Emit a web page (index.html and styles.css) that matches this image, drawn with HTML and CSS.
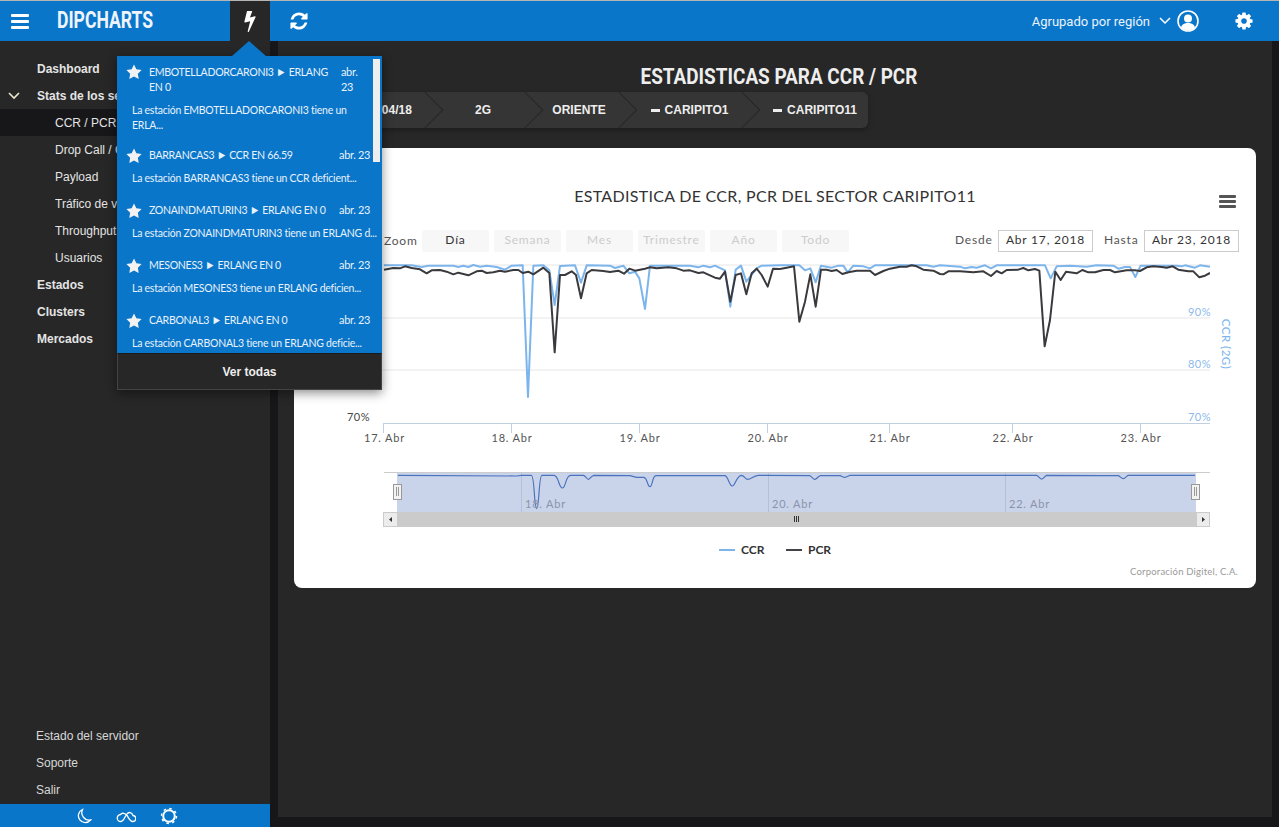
FILE: index.html
```html
<!DOCTYPE html>
<html lang="en">
<head>
<meta charset="UTF-8">
<meta name="viewport" content="width=device-width, initial-scale=1.0">
<title>Dipcharts</title>
<link rel="stylesheet" href="styles.css">
</head>
<body>

<header class="topbar">
    <button class="top-btn menu-btn" type="button">
        <svg width="18" height="15" viewBox="0 0 18 15"><rect width="18" height="3" rx="1"/><rect y="6" width="18" height="3" rx="1"/><rect y="12" width="18" height="3" rx="1"/></svg>
    </button>
    <div class="brand"><span class="brand-text">DIPCHARTS</span></div>
    <button class="top-btn bolt-btn" type="button">
        <svg width="12" height="21" viewBox="450 128 890 1664"><path d="M1333 566q18 20 7 44l-540 1157q-13 25-42 25-4 0-14-2-17-5-25.500-19t-4.500-30l197-808-406 101q-4 1-12 1-18 0-31-11-18-15-13-39l201-825q4-14 16-23t28-9h328q19 0 32 12.500t13 29.500q0 8-5 18l-171 463 396-98q8-2 12-2 19 0 34 15z"/></svg>
    </button>
    <button class="top-btn refresh-btn" type="button">
        <svg width="20" height="20" viewBox="0 0 1792 1792"><path d="M1639 1056q0 5-1 7-64 268-268 434.500t-478 166.500q-146 0-282.500-55t-243.500-157l-129 129q-19 19-45 19t-45-19-19-45v-448q0-26 19-45t45-19h448q26 0 45 19t19 45-19 45l-137 137q71 66 161 102t187 36q134 0 250-65t186-179q11-17 53-117 8-23 30-23h192q13 0 22.500 9.500t9.500 22.500zm25-800v448q0 26-19 45t-45 19h-448q-26 0-45-19t-19-45 19-45l138-138q-148-137-349-137-134 0-250 65t-186 179q-11 17-53 117-8 23-30 23h-199q-13 0-22.500-9.500t-9.500-22.500v-7q65-268 270-434.500t480-166.500q146 0 284 55.500t245 156.500l130-129q19-19 45-19t45 19 19 45z"/></svg>
    </button>
    <div class="top-right">
        <span class="group-label">Agrupado por región</span>
        <svg class="group-caret" width="12" height="8" viewBox="0 0 12 8"><path d="M1 1l5 5 5-5" fill="none" stroke="#fff" stroke-width="1.500"/></svg>
        <svg class="user-icon" width="22" height="22" viewBox="0 0 22 22"><circle cx="11" cy="11" r="10" fill="none" stroke="#fff" stroke-width="1.600"/><circle cx="11" cy="8.500" r="4"/><path d="M4 17.500c1-3.500 4-4.500 7-4.500s6 1 7 4.500c-2 2-4.500 3-7 3s-5-1-7-3z"/></svg>
        <svg class="gear-icon" width="20" height="20" viewBox="0 0 1792 1792"><path d="M1152 896q0-106-75-181t-181-75-181 75-75 181 75 181 181 75 181-75 75-181zm512-109v222q0 12-8 23t-20 13l-185 28q-19 54-39 91 35 50 107 138 10 12 10 25t-9 23q-27 37-99 108t-94 71q-12 0-26-9l-138-108q-44 23-91 38-16 136-29 186-7 28-36 28h-222q-14 0-24.500-8.500t-11.500-21.500l-28-184q-49-16-90-37l-141 107q-10 9-25 9-14 0-25-11-126-114-165-168-7-10-7-23 0-12 8-23 15-21 51-66.500t54-70.500q-27-50-41-99l-183-27q-13-2-21-12.500t-8-23.500v-222q0-12 8-23t19-13l186-28q14-46 39-92-40-57-107-138-10-12-10-24 0-10 9-23 26-36 98.500-107.500t94.500-71.500q13 0 26 10l138 107q44-23 91-38 16-136 29-186 7-28 36-28h222q14 0 24.500 8.500t11.500 21.500l28 184q49 16 90 37l142-107q9-9 24-9 13 0 25 10 129 119 165 170 7 8 7 22 0 12-8 23-15 21-51 66.500t-54 70.500q26 50 41 98l183 28q13 2 21 12.500t8 23.500z"/></svg>
    </div>
</header>

<div class="shell">
    <aside class="sidebar">
        <nav class="side-nav">
            <a class="side-item bold">Dashboard</a>
            <a class="side-item bold open">
                <svg class="open-caret" width="12" height="8" viewBox="0 0 12 8"><path d="M1 1l5 5 5-5" fill="none" stroke="#ece8cf" stroke-width="1.600"/></svg>
                Stats de los sectores
            </a>
            <a class="side-item sub current">CCR / PCR</a>
            <a class="side-item sub">Drop Call / CSSR</a>
            <a class="side-item sub">Payload</a>
            <a class="side-item sub">Tráfico de voz</a>
            <a class="side-item sub">Throughput</a>
            <a class="side-item sub">Usuarios</a>
            <a class="side-item bold">Estados</a>
            <a class="side-item bold">Clusters</a>
            <a class="side-item bold">Mercados</a>
        </nav>
        <div class="side-links">
            <a class="side-link">Estado del servidor</a>
            <a class="side-link">Soporte</a>
            <a class="side-link">Salir</a>
        </div>
        <div class="side-footer">
            <svg width="16" height="16" viewBox="0 0 16 16"><path d="M6.500 1.500A6.800 6.800 0 1 0 14.500 12 7.500 7.500 0 0 1 6.500 1.500z" fill="none" stroke="#fff" stroke-width="1.300"/></svg>
            <svg width="20" height="14" viewBox="0 0 20 14"><path d="M5 12.500a3.500 3.500 0 0 1-.5-7C6 3.500 9 4 11 6.500c1.500 2 3 6 5.500 6a3 3 0 0 0 .5-6C16 3 12.500 2.500 10.500 5.500 8.500 8.500 7.500 12.500 5 12.500z" fill="none" stroke="#fff" stroke-width="1.300"/></svg>
            <svg width="18" height="18" viewBox="0 0 18 18"><circle cx="9" cy="9" r="5.800" fill="none" stroke="#fff" stroke-width="2"/><circle cx="9" cy="9" r="7.500" fill="none" stroke="#fff" stroke-width="1.500" stroke-dasharray="2.500 3.390"/></svg>
        </div>
    </aside>

    <main class="content">
        <h1 class="page-title"><span class="page-title-text">ESTADISTICAS PARA CCR / PCR</span></h1>

        <div class="crumbs">
            <div class="crumb crumb-date">23/04/18</div>
            <div class="crumb crumb-tech">2G</div>
            <div class="crumb crumb-region">ORIENTE</div>
            <div class="crumb crumb-site"><i class="dash"></i>CARIPITO1</div>
            <div class="crumb crumb-sector"><i class="dash"></i>CARIPITO11</div>
        </div>

        <section class="card">
            <h2 class="chart-title">ESTADISTICA DE CCR, PCR DEL SECTOR CARIPITO11</h2>
            <svg class="chart-menu" width="17" height="13" viewBox="0 0 17 13"><rect width="17" height="3" rx="1"/><rect y="5" width="17" height="3" rx="1"/><rect y="10" width="17" height="3" rx="1"/></svg>

            <div class="toolbar">
                <span class="zoom-label">Zoom</span>
                <button class="range-btn active" type="button">Día</button>
                <button class="range-btn" type="button">Semana</button>
                <button class="range-btn" type="button">Mes</button>
                <button class="range-btn" type="button">Trimestre</button>
                <button class="range-btn" type="button">Año</button>
                <button class="range-btn" type="button">Todo</button>
                <div class="dates">
                    <span class="date-label">Desde</span>
                    <span class="date-box">Abr 17, 2018</span>
                    <span class="date-label date-label-to">Hasta</span>
                    <span class="date-box">Abr 23, 2018</span>
                </div>
            </div>

            <svg class="plot" width="962" height="310" viewBox="294 258 962 310">
                <defs>
                    <clipPath id="plotClip"><rect x="383" y="258" width="827" height="166"/></clipPath>
                </defs>

                <line class="grid" x1="383" y1="265" x2="1210" y2="265"/>
                <line class="grid" x1="383" y1="318" x2="1210" y2="318"/>
                <line class="grid" x1="383" y1="370" x2="1210" y2="370"/>
                <line class="axis" x1="383" y1="423.500" x2="1210" y2="423.500"/>
                <path class="axis" d="M383.500 423v10M511.500 423v10M639.500 423v10M767.500 423v10M889.500 423v10M1012.500 423v10M1140.500 423v10"/>

                <g clip-path="url(#plotClip)">
                    <g transform="translate(340 255) scale(.33333)">
                        <polyline class="line-ccr" points="132,31 215,31 245,36 265,32 340,32 355,36 370,32 385,36 400,30 420,35 440,32 470,36 495,44 515,32 548,31 564,426 580,32 610,31 628,46 644,150 660,33 705,31 723,83 740,31 810,32 825,39 850,32 868,55 885,50 898,70 915,162 930,32 1050,32 1075,37 1090,32 1110,37 1125,32 1155,46 1171,155 1187,44 1203,32 1219,80 1250,40 1265,32 1320,31"/>
                    </g>
                    <g transform="translate(780 255) scale(.33333)">
                        <polyline class="line-ccr" points="0,31 58,31 75,46 91,40 107,82 123,32 155,38 175,32 190,32 203,52 220,32 250,34 270,40 285,31 440,31 460,35 480,31 540,35 555,40 575,36 590,38 615,31 633,40 650,31 795,31 812,70 830,34 870,32 920,35 950,31 1000,32 1015,41 1035,36 1050,36 1066,66 1082,32 1190,32 1205,34 1215,31 1245,38 1260,31 1290,35"/>
                    </g>
                    <g transform="translate(340 255) scale(.33333)">
                        <polyline class="line-pcr" points="132,44 160,39 180,40 195,34 215,39 240,43 260,55 275,46 300,45 320,50 340,58 355,53 385,61 410,49 425,47 440,54 460,52 480,47 495,50 520,45 535,45 548,54 565,50 580,58 610,38 628,54 644,292 660,60 675,60 695,49 708,60 723,130 740,55 755,45 790,48 810,51 835,47 852,56 868,41 885,47 915,41 930,37 950,40 985,37 1010,40 1030,47 1050,46 1075,54 1090,52 1125,68 1140,71 1155,50 1171,140 1187,60 1203,55 1219,118 1235,55 1250,41 1265,60 1283,95 1299,41 1320,42"/>
                    </g>
                    <g transform="translate(780 255) scale(.33333)">
                        <polyline class="line-pcr" points="0,42 20,38 42,34 58,200 75,140 91,58 107,155 123,44 140,44 155,48 170,45 187,57 205,52 230,47 270,47 285,60 310,48 330,41 360,35 380,35 395,31 410,34 430,44 460,47 480,57 490,58 505,49 540,49 580,52 610,49 633,63 650,48 665,55 680,45 715,44 730,39 745,46 765,42 778,47 794,274 810,195 826,50 842,75 858,50 890,55 907,45 925,52 945,52 970,45 990,45 1005,52 1040,46 1065,46 1080,48 1100,37 1120,34 1145,36 1160,38 1178,34 1195,44 1225,49 1240,49 1258,67 1275,62 1290,54"/>
                    </g>
                </g>

                <text class="tick-left" x="370" y="421" text-anchor="end">70%</text>
                <text class="tick-right" x="1211" y="316" text-anchor="end">90%</text>
                <text class="tick-right" x="1211" y="368" text-anchor="end">80%</text>
                <text class="tick-right" x="1211" y="421" text-anchor="end">70%</text>
                <text class="axis-name" transform="translate(1222 344) rotate(90)" text-anchor="middle">CCR (2G)</text>

                <text class="tick-x" x="384.500" y="442" text-anchor="middle">17. Abr</text>
                <text class="tick-x" x="512" y="442" text-anchor="middle">18. Abr</text>
                <text class="tick-x" x="640" y="442" text-anchor="middle">19. Abr</text>
                <text class="tick-x" x="768" y="442" text-anchor="middle">20. Abr</text>
                <text class="tick-x" x="890" y="442" text-anchor="middle">21. Abr</text>
                <text class="tick-x" x="1013" y="442" text-anchor="middle">22. Abr</text>
                <text class="tick-x" x="1141" y="442" text-anchor="middle">23. Abr</text>

                <!-- navigator -->
                <line class="nav-top" x1="384" y1="472.500" x2="1210" y2="472.500"/>
                <rect class="nav-mask" x="397" y="473" width="799" height="39"/>
                <path class="nav-grid" d="M521.500 473v39M768.500 473v39M1005.500 473v39"/>
                <g transform="translate(370 460) scale(.33333)">
                    <path class="nav-line" d="M84 46L440 48L455 46L484 46C494 46 492 145 500 145C508 145 506 46 516 46L552 46C566 46 566 84 577 84C588 84 586 46 602 46L640 46C648 48 650 58 655 58C660 58 662 48 672 46L780 47L800 52L822 52C832 54 832 80 840 80C848 80 846 48 858 47L1065 47C1075 50 1078 78 1087 78C1096 78 1098 48 1115 46C1124 48 1126 58 1133 58C1142 58 1150 48 1165 46L1320 47C1325 50 1330 58 1335 58C1340 58 1343 50 1350 47"/>
                </g>
                <g transform="translate(800 460) scale(.33333)">
                    <path class="nav-line" d="M60 47L120 47C126 49 130 52 135 52C140 52 144 48 150 46L710 46C716 48 720 57 725 57C730 57 734 48 740 46L905 47L955 47C960 49 965 56 970 56C975 56 980 48 985 46L1185 46"/>
                </g>
                <text class="nav-label" x="525" y="508">18. Abr</text>
                <text class="nav-label" x="772" y="508">20. Abr</text>
                <text class="nav-label" x="1009" y="508">22. Abr</text>

                <rect class="nav-handle" x="393.500" y="484.500" width="8" height="15"/>
                <path class="nav-grip" d="M396.500 487v9M398.500 487v9"/>
                <rect class="nav-handle" x="1191.500" y="484.500" width="8" height="15"/>
                <path class="nav-grip" d="M1194.500 487v9M1196.500 487v9"/>

                <rect class="scroll-track" x="383" y="512" width="827" height="15"/>
                <rect class="scroll-btn" x="383.500" y="512.500" width="14" height="14"/>
                <rect class="scroll-btn" x="1196.500" y="512.500" width="13" height="14"/>
                <path class="scroll-arrow" d="M392 517v5l-3-2.500zM1202 517v5l3-2.500z"/>
                <path class="nav-grip-dark" d="M794.500 516v6M796.500 516v6M798.500 516v6"/>

                <!-- legend -->
                <line class="line-ccr-solid" x1="719" y1="550" x2="735" y2="550"/>
                <text class="legend-text" x="741" y="554">CCR</text>
                <line class="line-pcr-solid" x1="786" y1="550" x2="802" y2="550"/>
                <text class="legend-text" x="808" y="554">PCR</text>
            </svg>

            <div class="credits">Corporación Digitel, C.A.</div>
        </section>
    </main>
</div>

<!-- notifications dropdown -->
<div class="notif">
    <div class="notif-arrow"></div>
    <div class="notif-list">
        <div class="notif-scroll"></div>
        <div class="notif-item notif-item-long">
            <div class="notif-head">
                <svg class="star" width="16" height="15" viewBox="0 0 17 16"><path d="M8.500 .5l2.500 5.200 5.600.8-4 4 .9 5.500-5-2.700-5 2.700.9-5.500-4-4 5.600-.8z"/></svg>
                <span class="notif-title">EMBOTELLADORCARONI3 ► ERLANG<br>EN 0</span>
                <span class="notif-date notif-date-wrap">abr.<br>23</span>
            </div>
            <p class="notif-text">La estación EMBOTELLADORCARONI3 tiene un<br>ERLA...</p>
        </div>
        <div class="notif-item">
            <div class="notif-head">
                <svg class="star" width="16" height="15" viewBox="0 0 17 16"><path d="M8.500 .5l2.500 5.200 5.600.8-4 4 .9 5.500-5-2.700-5 2.700.9-5.500-4-4 5.600-.8z"/></svg>
                <span class="notif-title">BARRANCAS3 ► CCR EN 66.59</span>
                <span class="notif-date">abr. 23</span>
            </div>
            <p class="notif-text">La estación BARRANCAS3 tiene un CCR deficient...</p>
        </div>
        <div class="notif-item">
            <div class="notif-head">
                <svg class="star" width="16" height="15" viewBox="0 0 17 16"><path d="M8.500 .5l2.500 5.200 5.600.8-4 4 .9 5.500-5-2.700-5 2.700.9-5.500-4-4 5.600-.8z"/></svg>
                <span class="notif-title">ZONAINDMATURIN3 ► ERLANG EN 0</span>
                <span class="notif-date">abr. 23</span>
            </div>
            <p class="notif-text">La estación ZONAINDMATURIN3 tiene un ERLANG d...</p>
        </div>
        <div class="notif-item">
            <div class="notif-head">
                <svg class="star" width="16" height="15" viewBox="0 0 17 16"><path d="M8.500 .5l2.500 5.200 5.600.8-4 4 .9 5.500-5-2.700-5 2.700.9-5.500-4-4 5.600-.8z"/></svg>
                <span class="notif-title">MESONES3 ► ERLANG EN 0</span>
                <span class="notif-date">abr. 23</span>
            </div>
            <p class="notif-text">La estación MESONES3 tiene un ERLANG deficien...</p>
        </div>
        <div class="notif-item">
            <div class="notif-head">
                <svg class="star" width="16" height="15" viewBox="0 0 17 16"><path d="M8.500 .5l2.500 5.200 5.600.8-4 4 .9 5.500-5-2.700-5 2.700.9-5.500-4-4 5.600-.8z"/></svg>
                <span class="notif-title">CARBONAL3 ► ERLANG EN 0</span>
                <span class="notif-date">abr. 23</span>
            </div>
            <p class="notif-text">La estación CARBONAL3 tiene un ERLANG deficie...</p>
        </div>
    </div>
    <div class="notif-foot">Ver todas</div>
</div>

</body>
</html>
```

FILE: styles.css
```css
html, body {
    margin: 0;
    height: 100%;
}
body {
    display: flex;
    flex-direction: column;
    height: 827px;
    overflow: hidden;
    background-color: #17171a;
    font-family: "Liberation Sans", Arial, sans-serif;
}

/* top bar */
.topbar {
    display: flex;
    align-items: stretch;
    flex: none;
    height: 40px;
    border-top: 1px solid #b5b5b5;
    background-color: #0a76c9;
    color: #fff;
}
.top-btn {
    display: flex;
    align-items: center;
    justify-content: center;
    padding: 0;
    border: none;
    background: none;
    fill: #fff;
}
.menu-btn {
    width: 40px;
}
.brand {
    width: 190px;
    padding-left: 17px;
    box-sizing: border-box;
    line-height: 40px;
}
.brand-text {
    display: inline-block;
    font-family: Roboto, sans-serif;
    font-size: 23px;
    font-weight: 700;
    color: #eef4fa;
    transform: scaleX(.765);
    transform-origin: left center;
}
.bolt-btn {
    width: 40px;
    background-color: #272727;
}
.refresh-btn {
    width: 57px;
}
.top-right {
    display: flex;
    align-items: center;
    margin-left: auto;
    padding-right: 25px;
    fill: #fff;
}
.group-label {
    font-family: Roboto, sans-serif;
    font-size: 13px;
    color: #eaf2fa;
}
.group-caret {
    margin-left: 9px;
}
.user-icon {
    margin-left: 6px;
}
.gear-icon {
    margin-left: 35px;
}

/* layout */
.shell {
    display: flex;
    flex: 1;
    min-height: 0;
}
.sidebar {
    display: flex;
    flex-direction: column;
    width: 270px;
    background-color: #272727;
}
.content {
    width: 994px;
    margin: 0 7px 10px 8px;
    background-color: #272727;
}

/* sidebar */
.side-nav {
    padding-top: 14px;
}
.side-item {
    display: flex;
    align-items: center;
    position: relative;
    height: 27px;
    padding-left: 37px;
    font-size: 12px;
    color: #e4e4e4;
}
.side-item.bold {
    font-weight: bold;
}
.side-item.sub {
    padding-left: 55px;
}
.side-item.current {
    background-color: #17171a;
}
.open-caret {
    position: absolute;
    left: 8px;
    top: 10px;
}
.side-links {
    margin-top: auto;
    padding-bottom: 1px;
}
.side-link {
    display: flex;
    align-items: center;
    height: 27px;
    padding-left: 36px;
    font-size: 12px;
    color: #d8d8d8;
}
.side-footer {
    display: flex;
    align-items: center;
    justify-content: center;
    gap: 24px;
    height: 23px;
    padding-right: 16px;
    background-color: #0a76c9;
}

/* page head */
.page-title {
    margin: 0;
    padding: 23px 0 0 7px;
    height: 28px;
    text-align: center;
    line-height: 25px;
    font-size: 22px;
}
.page-title-text {
    display: inline-block;
    font-family: Roboto, sans-serif;
    font-weight: 700;
    color: #eee;
    transform: scaleX(.86);
}
.crumbs {
    display: flex;
    width: 578px;
    height: 36px;
    margin: 0 0 20px 12px;
    border-radius: 0 6px 6px 0;
    background-color: #353535;
    box-shadow: 0 2px 5px rgba(0, 0, 0, .3);
    font-size: 12px;
    font-weight: bold;
    color: #eee;
}
.crumb {
    display: flex;
    align-items: center;
    justify-content: center;
    position: relative;
    box-sizing: border-box;
    padding-left: 16px;
}
.crumb::after {
    content: "";
    position: absolute;
    right: -13px;
    top: 5px;
    z-index: 1;
    width: 25px;
    height: 25px;
    border-top: 1px solid #272727;
    border-right: 1px solid #272727;
    transform: rotate(45deg);
}
.crumb:last-child::after {
    display: none;
}
.crumb-date {
    width: 135px;
    padding-left: 62px;
}
.crumb-tech {
    width: 100px;
}
.crumb-region {
    width: 94px;
    padding-left: 14px;
}
.crumb-site {
    width: 123px;
    padding-left: 18px;
}
.crumb-sector {
    width: 126px;
    padding-left: 20px;
}
.dash {
    width: 9px;
    height: 3px;
    margin-right: 5px;
    background-color: #eee;
}

/* chart card */
.card {
    position: relative;
    width: 962px;
    height: 440px;
    margin-left: 16px;
    border-radius: 8px;
    background-color: #fff;
}
.chart-title {
    margin: 0;
    padding-top: 38px;
    text-align: center;
    line-height: 20px;
    font-family: Lato, sans-serif;
    font-size: 16px;
    font-weight: 400;
    letter-spacing: .3px;
    color: #333;
}
.chart-menu {
    position: absolute;
    top: 47px;
    right: 20px;
    fill: #555;
}
.toolbar {
    display: flex;
    align-items: center;
    gap: 5px;
    height: 22px;
    margin-top: 24px;
    padding: 0 17px 0 90px;
    font-family: Lato, sans-serif;
    font-size: 12px;
    letter-spacing: .8px;
}
.zoom-label {
    width: 33px;
    margin-top: -1px;
    color: #555;
}
.range-btn {
    width: 67px;
    height: 22px;
    padding: 0 0 3px;
    border: none;
    border-radius: 2px;
    background-color: #f7f7f7;
    font: inherit;
    letter-spacing: inherit;
    color: #ccc;
}
.range-btn.active {
    color: #333;
}
.dates {
    display: flex;
    align-items: center;
    margin-left: auto;
    color: #555;
}
.date-label {
    width: 36px;
    margin-right: 7px;
    margin-top: -3px;
}
.date-label-to {
    margin-left: 11px;
    margin-right: 4px;
}
.date-box {
    width: 95px;
    height: 22px;
    box-sizing: border-box;
    border: 1px solid #ccc;
    text-align: center;
    line-height: 18px;
    color: #333;
}
.plot {
    display: block;
    margin-top: 6px;
    font-family: Lato, sans-serif;
}
.credits {
    position: absolute;
    right: 18px;
    bottom: 11px;
    font-family: Lato, sans-serif;
    font-size: 9.500px;
    letter-spacing: .2px;
    color: #999;
}

/* chart bits */
.grid {
    stroke: #e6e6e6;
    stroke-width: 1;
}
.axis {
    fill: none;
    stroke: #c0d0e0;
    stroke-width: 1;
}
.line-ccr, .line-pcr, .nav-line {
    fill: none;
    stroke-linejoin: round;
    stroke-width: 6;
}
.line-ccr {
    stroke: #7cb5ec;
}
.line-pcr {
    stroke: #3a3a3e;
}
.line-ccr-solid {
    stroke: #7cb5ec;
    stroke-width: 2;
}
.line-pcr-solid {
    stroke: #434348;
    stroke-width: 2;
}
.tick-left {
    font-size: 11px;
    letter-spacing: .5px;
    fill: #444;
}
.tick-right {
    font-size: 11px;
    letter-spacing: .5px;
    fill: #8db9ec;
}
.axis-name {
    font-size: 11.500px;
    letter-spacing: .5px;
    fill: #7cb5ec;
}
.tick-x {
    font-size: 11px;
    letter-spacing: .8px;
    fill: #555;
}
.nav-top {
    stroke: #ccc;
}
.nav-mask {
    fill: #c9d4eb;
}
.nav-grid {
    fill: none;
    stroke: #b3c0dc;
}
.nav-line {
    stroke: #4a72bd;
    stroke-width: 3.500;
}
.nav-label {
    font-size: 11px;
    letter-spacing: .8px;
    fill: #8a93a8;
}
.nav-handle {
    fill: #f2f2f2;
    stroke: #999;
}
.nav-grip {
    fill: none;
    stroke: #999;
}
.scroll-track {
    fill: #cbcbcb;
}
.scroll-btn {
    fill: #ececec;
    stroke: #cbcbcb;
}
.scroll-arrow {
    fill: #333;
}
.nav-grip-dark {
    fill: none;
    stroke: #333;
}
.legend-text {
    font-size: 12px;
    font-weight: 700;
    fill: #333;
}

/* notifications */
.notif {
    position: absolute;
    top: 56px;
    left: 117px;
    z-index: 5;
    width: 265px;
    box-shadow: 0 3px 10px rgba(0, 0, 0, .45);
    font-family: Lato, sans-serif;
}
.notif-arrow {
    position: absolute;
    top: -15px;
    left: 115px;
    width: 0;
    height: 0;
    border-left: 17px solid transparent;
    border-right: 17px solid transparent;
    border-bottom: 15px solid #0a76c9;
}
.notif-list {
    position: relative;
    height: 297px;
    overflow: hidden;
    box-sizing: border-box;
    padding-top: 8px;
    background-color: #0a76c9;
    color: #e8f2fb;
}
.notif-scroll {
    position: absolute;
    top: 3px;
    right: 2px;
    width: 7px;
    height: 103px;
    background-color: #eee;
}
.notif-item {
    padding: 0 12px 18px 9px;
}
.notif-item-long {
    padding-bottom: 16px;
}
.notif-item-long .notif-head, .notif-item-long .notif-text {
    line-height: 15px;
}
.notif-head {
    display: flex;
    align-items: flex-start;
    font-size: 12px;
    line-height: 14.500px;
    white-space: nowrap;
}
.star {
    flex: none;
    margin-bottom: -1px;
    fill: #f2f2f2;
}
.notif-title {
    flex: 1 1 0;
    min-width: 0;
    margin-left: 7px;
    letter-spacing: -.35px;
    transform: scaleX(.88);
    transform-origin: left center;
}
.notif-date {
    flex: none;
    letter-spacing: -.35px;
    transform: scaleX(.91);
    transform-origin: right center;
}
.notif-date-wrap {
    width: 29px;
    transform-origin: left center;
}
.notif-text {
    margin: 8px 0 0 6px;
    font-size: 11.500px;
    line-height: 14.500px;
    letter-spacing: -.25px;
    white-space: nowrap;
    transform: scaleX(.91);
    transform-origin: left center;
}
.notif-foot {
    height: 37px;
    border: 1px solid #444;
    border-top-color: #1a1a1a;
    box-sizing: border-box;
    background-color: #272727;
    text-align: center;
    line-height: 37px;
    font-family: "Liberation Sans", Arial, sans-serif;
    font-size: 12px;
    font-weight: bold;
    color: #eee;
}
```
